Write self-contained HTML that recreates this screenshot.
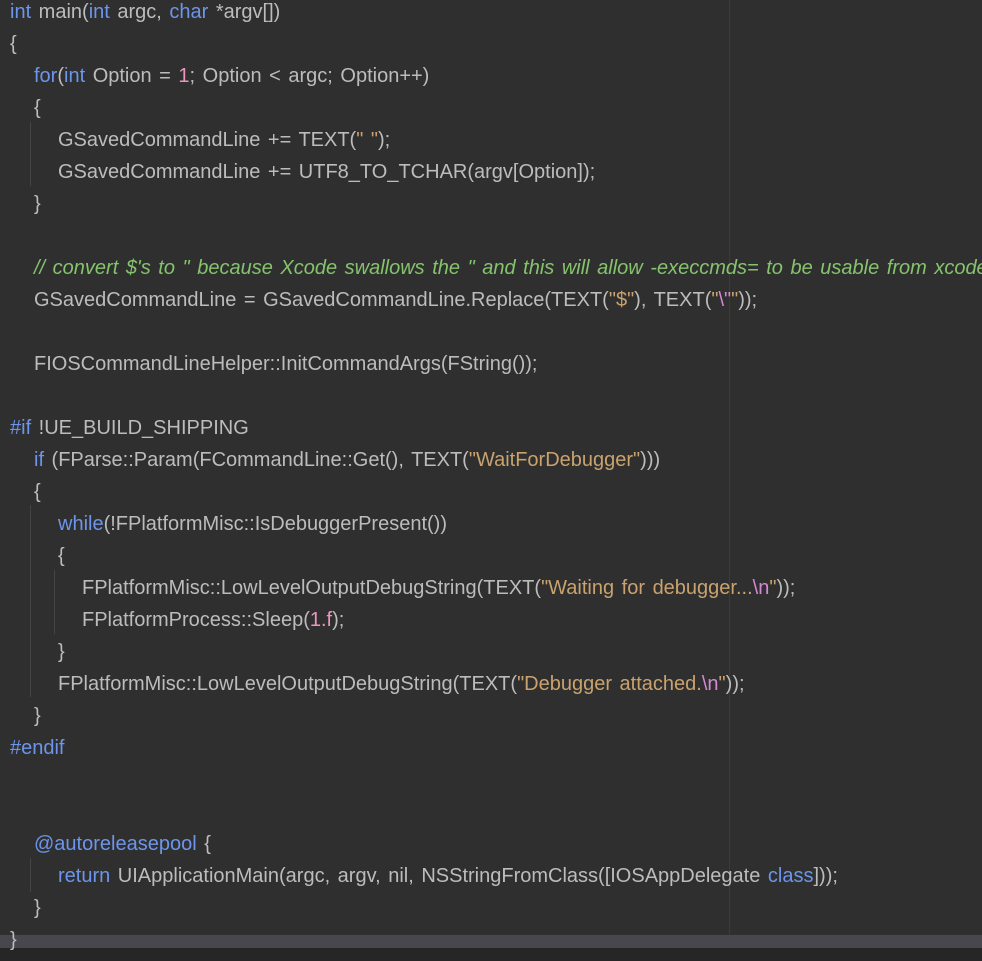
<!DOCTYPE html><html><head><meta charset="utf-8"><style>
html,body{margin:0;padding:0;width:982px;height:961px;overflow:hidden;background:#2f2f2f}
body{position:relative;font-family:"Liberation Sans",sans-serif;font-size:20px;word-spacing:2px;color:#bcbcbc}
.l{position:absolute;left:0;height:32px;line-height:32px;white-space:pre}
.k{color:#6c95eb}.n{color:#ed94c0}.s{color:#c9a26d}.c{color:#85c46c;font-style:italic}.e{color:#d688d4}
.g{position:absolute;width:1px;background:#444}
</style></head><body>
<div style="position:absolute;left:729px;top:0;width:1px;height:948px;background:#3b3b3b"></div>
<div style="position:absolute;left:0;top:935px;width:982px;height:13px;background:#48474d"></div>
<div style="position:absolute;left:0;top:948px;width:982px;height:13px;background:#262626"></div>
<div class="g" style="left:30px;top:122px;height:64px"></div>
<div class="g" style="left:30px;top:505px;height:192px"></div>
<div class="g" style="left:54px;top:570px;height:64px"></div>
<div class="g" style="left:30px;top:858px;height:34px"></div>
<div class="l" style="top:-4px;left:10px"><span class="k">int</span> main(<span class="k">int</span> argc, <span class="k">char</span> *argv[])</div>
<div class="l" style="top:28px;left:10px">{</div>
<div class="l" style="top:60px;left:34px"><span class="k">for</span>(<span class="k">int</span> Option = <span class="n">1</span>; Option &lt; argc; Option++)</div>
<div class="l" style="top:92px;left:34px">{</div>
<div class="l" style="top:124px;left:58px">GSavedCommandLine += TEXT(<span class="s">" "</span>);</div>
<div class="l" style="top:156px;left:58px">GSavedCommandLine += UTF8_TO_TCHAR(argv[Option]);</div>
<div class="l" style="top:188px;left:34px">}</div>
<div class="l c" style="top:252px;left:34px">// convert $'s to " because Xcode swallows the " and this will allow -execcmds= to be usable from xcode</div>
<div class="l" style="top:284px;left:34px">GSavedCommandLine = GSavedCommandLine.Replace(TEXT(<span class="s">"$"</span>), TEXT(<span class="s">"<span class="e">\"</span>"</span>));</div>
<div class="l" style="top:348px;left:34px">FIOSCommandLineHelper::InitCommandArgs(FString());</div>
<div class="l" style="top:412px;left:10px"><span class="k">#if</span> !UE_BUILD_SHIPPING</div>
<div class="l" style="top:444px;left:34px"><span class="k">if</span> (FParse::Param(FCommandLine::Get(), TEXT(<span class="s">"WaitForDebugger"</span>)))</div>
<div class="l" style="top:476px;left:34px">{</div>
<div class="l" style="top:508px;left:58px"><span class="k">while</span>(!FPlatformMisc::IsDebuggerPresent())</div>
<div class="l" style="top:540px;left:58px">{</div>
<div class="l" style="top:572px;left:82px">FPlatformMisc::LowLevelOutputDebugString(TEXT(<span class="s">"Waiting for debugger...<span class="e">\n</span>"</span>));</div>
<div class="l" style="top:604px;left:82px">FPlatformProcess::Sleep(<span class="n">1.f</span>);</div>
<div class="l" style="top:636px;left:58px">}</div>
<div class="l" style="top:668px;left:58px">FPlatformMisc::LowLevelOutputDebugString(TEXT(<span class="s">"Debugger attached.<span class="e">\n</span>"</span>));</div>
<div class="l" style="top:700px;left:34px">}</div>
<div class="l k" style="top:732px;left:10px">#endif</div>
<div class="l" style="top:828px;left:34px"><span class="k">@autoreleasepool</span> {</div>
<div class="l" style="top:860px;left:58px"><span class="k">return</span> UIApplicationMain(argc, argv, nil, NSStringFromClass([IOSAppDelegate <span class="k">class</span>]));</div>
<div class="l" style="top:892px;left:34px">}</div>
<div class="l" style="top:924px;left:10px">}</div>
</body></html>
